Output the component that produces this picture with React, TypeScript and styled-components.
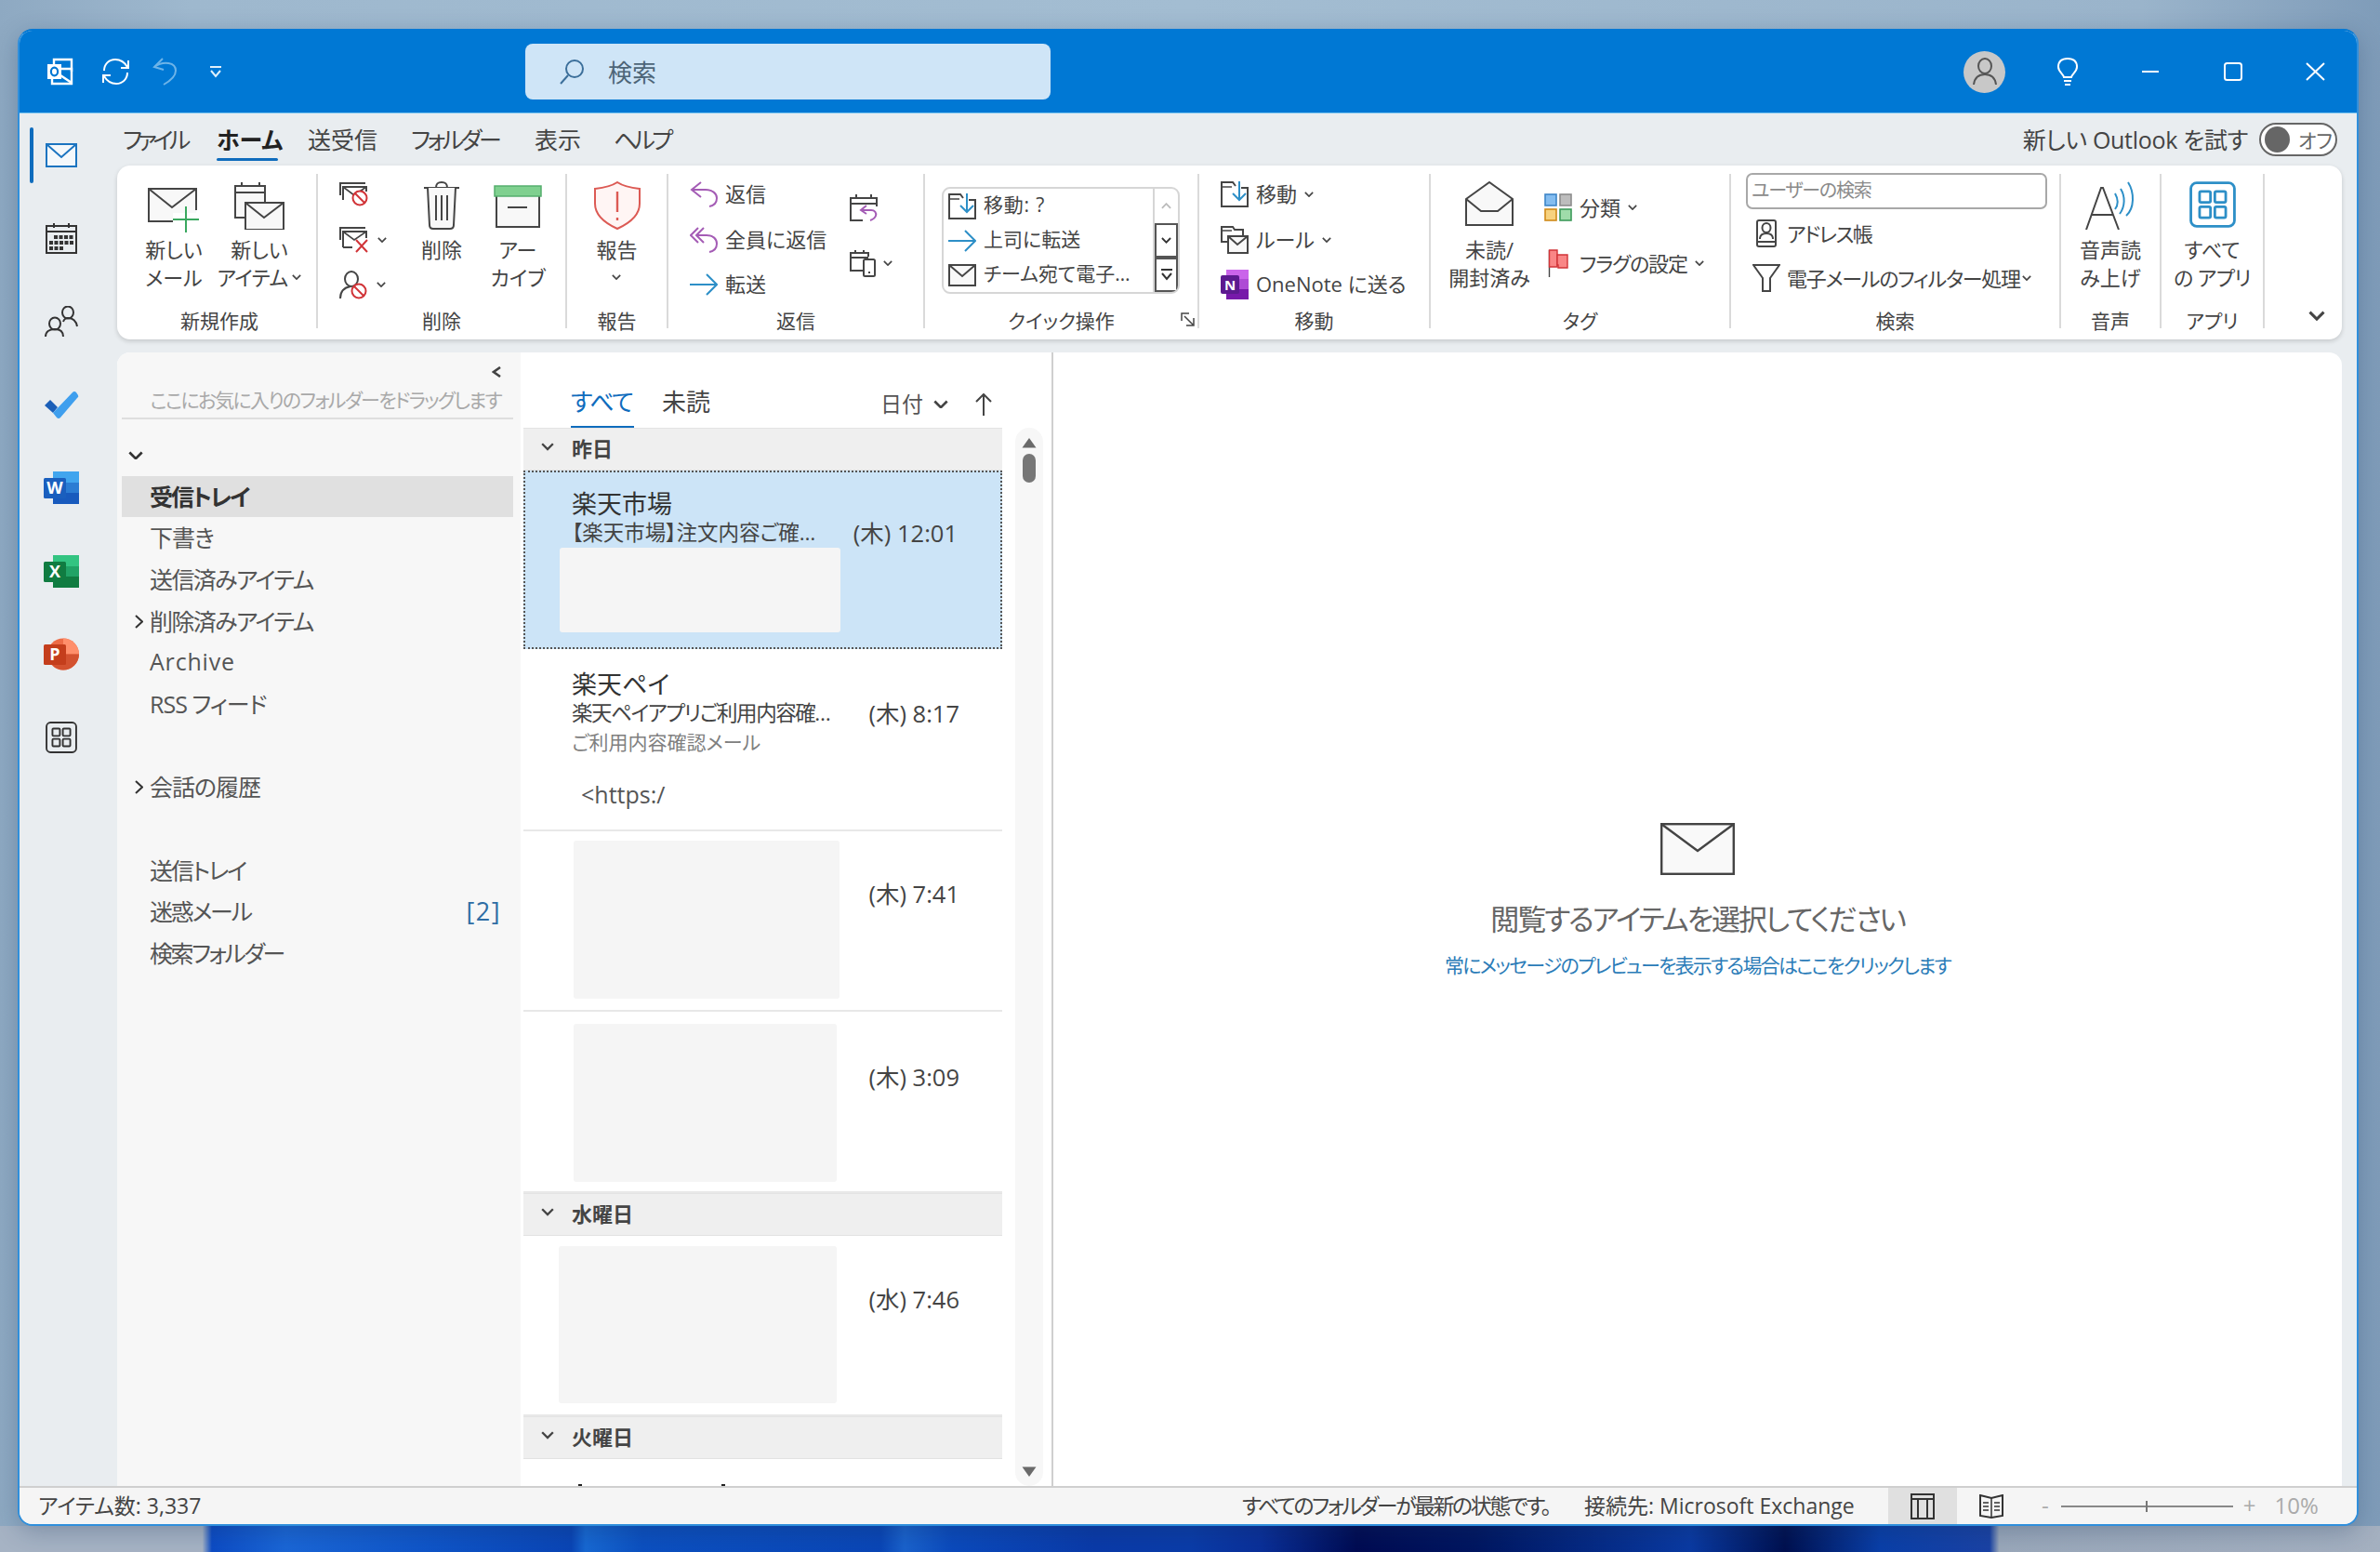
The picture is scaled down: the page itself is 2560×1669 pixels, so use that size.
import React from "react";
import styled, { createGlobalStyle } from "styled-components";

const Global = createGlobalStyle`
  html, body { margin: 0; padding: 0; }
  body {
    width: 2560px; height: 1669px; overflow: hidden;
    font-family: "Open Sans", "Noto Sans CJK JP", sans-serif;
    font-feature-settings: "palt";
    color: #444;
    background:
      linear-gradient(90deg, #a6b3c4 0 8.5%, #0d4cc4 8.9%, #1a66d6 12%, #0f55c8 18%, #0a45b5 24%, #1768d2 24.6%, #0c50c0 27%, #0a46b6 37%, #1a62cc 38%, #0b4abc 40%, #0a3aa8 46%, #0a3ca8 50%, #0a2f98 53%, #000b52 57%, #001660 62%, #0a3aa2 71%, #00104f 75%, #0a3fa8 79%, #1a42a4 83.6%, #9aa8ba 84%, #a4b0c0 100%) left bottom / 100% 28px no-repeat,
      linear-gradient(90deg, #8ea9c2 0, #9eb8ce 8%, #a3bdd2 50%, #9ab4cb 90%, #7f9cb9 100%);
  }
  * { box-sizing: border-box; }
`;

const Page = styled.div`
  width: 2560px; height: 1669px;
  padding: 31px 23px 28px 19px;
`;
const Window = styled.div`
  width: 2518px; height: 1610px;
  display: flex; flex-direction: column;
  border: 2px solid #2f8fdc; border-top-color: #0078d4;
  border-radius: 16px; overflow: hidden;
  box-shadow: 0 6px 26px rgba(20, 50, 90, .28);
  background: #e9edf0;
`;

/* ---------- title bar ---------- */
const TitleBar = styled.header`
  height: 89px; flex: none; background: #0078d4;
  display: flex; align-items: center;
  border-bottom: 1px solid #7cc4f0;
`;
const QuickAccess = styled.div`
  width: 544px; flex: none; display: flex; align-items: center;
  padding-left: 29px; gap: 29px;
`;
const UndoSlot = styled.span`
  display: flex; margin: 0 5px 0 -5px;
`;
const SearchBox = styled.div`
  width: 565px; height: 60px; flex: none;
  background: #cfe5f7; border-radius: 8px;
  display: flex; align-items: center; gap: 26px;
  padding-left: 37px; font-size: 26px; color: #4d6577;
`;
const TitleRight = styled.div`
  margin-left: auto; display: flex; align-items: center;
`;
const TitleSlot = styled.div`
  width: 89px; height: 60px; display: flex; align-items: center; justify-content: center;
`;
const Avatar = styled.div`
  width: 45px; height: 45px; border-radius: 50%; background: #c8c8c8;
  display: flex; align-items: center; justify-content: center;
`;

/* ---------- middle ---------- */
const Middle = styled.div`
  flex: 1; display: flex; min-height: 0;
`;
const Rail = styled.nav`
  width: 105px; flex: none; display: flex; flex-direction: column; align-items: stretch;
`;
const RailItem = styled.div<{ $active?: boolean }>`
  height: 89.5px; flex: none; position: relative;
  display: flex; align-items: center; justify-content: center;
  padding-right: 16px;
  ${p => p.$active ? `
    &::before {
      content: ""; position: absolute; left: 11px; top: 15px; width: 4px; height: 60px;
      border-radius: 2px; background: #0f6cbd;
    }` : ""}
`;
const MainCol = styled.div`
  flex: 1; min-width: 0; display: flex; flex-direction: column; padding-right: 16px;
`;

/* ---------- tabs ---------- */
const TabRow = styled.div`
  height: 56px; flex: none; display: flex; align-items: center; padding: 0 5px 0 6px;
`;
const MenuTab = styled.div<{ $active?: boolean; $w: number; $ls?: number }>`
  width: ${p => p.$w}px; flex: none; height: 40px; line-height: 40px;
  font-size: 25px; white-space: nowrap; position: relative;
  letter-spacing: ${p => p.$ls ?? 0}px;
  font-weight: ${p => (p.$active ? 700 : 400)};
  color: ${p => (p.$active ? "#222" : "#444")};
  ${p => p.$active ? `
    &::after {
      content: ""; position: absolute; left: 0; width: 66px; bottom: -3px; height: 3px;
      border-radius: 2px; background: #0f6cbd;
    }` : ""}
`;
const TryOutlook = styled.div`
  margin-left: auto; display: flex; align-items: center; gap: 12px; font-size: 25px; color: #444;
`;
const TryText = styled.span`
  padding-bottom: 3px; letter-spacing: -.3px;
`;
const Toggle = styled.div`
  width: 84px; height: 36px; border-radius: 18px; border: 2px solid #666;
  display: flex; align-items: center; gap: 9px; padding-left: 4px;
  font-size: 21px; color: #666; background: #fff;
`;
const ToggleKnob = styled.span`
  width: 27px; height: 28px; border-radius: 50%; background: #666; flex: none;
`;

/* ---------- ribbon ---------- */
const Ribbon = styled.div`
  height: 187px; flex: none; background: #fff; border-radius: 14px;
  box-shadow: 0 2px 5px rgba(0, 0, 0, .16);
  display: flex; padding-top: 9px; font-size: 22px; color: #444;
`;
const Group = styled.section<{ $w: number; $last?: boolean }>`
  width: ${p => p.$w}px; flex: none; height: 166px;
  display: flex; flex-direction: column;
  border-right: ${p => (p.$last ? "none" : "2px solid #dadada")};
`;
const GroupBody = styled.div<{ $pl?: number; $gap?: number; $center?: boolean }>`
  flex: 1; min-height: 0; display: flex;
  padding-left: ${p => p.$pl ?? 0}px;
  gap: ${p => p.$gap ?? 0}px;
  justify-content: ${p => (p.$center ? "center" : "flex-start")};
`;
const GroupLabel = styled.div<{ $pl?: number }>`
  height: 22px; line-height: 22px; margin-bottom: -3px; text-align: center;
  padding-left: ${p => p.$pl ?? 0}px;
  font-size: 21px; color: #444; position: relative; flex: none;
`;
const Launcher = styled.span`
  position: absolute; right: 3px; top: 2px; display: flex;
`;
const LargeBtn = styled.div<{ $w: number }>`
  width: ${p => p.$w}px; flex: none; display: flex; flex-direction: column; align-items: center;
  padding-top: 8px;
`;
const IconBox = styled.div`
  height: 52px; flex: none; display: flex; align-items: flex-start; justify-content: center;
`;
const BtnLines = styled.div`
  margin-top: 6px; text-align: center; line-height: 30px; white-space: nowrap;
`;
const BtnLine = styled.div<{ $ls?: number }>`
  display: flex; align-items: center; justify-content: center; gap: 5px; height: 30px;
  letter-spacing: ${p => p.$ls ?? 0}px;
`;
const Stack = styled.div<{ $w?: number; $pl?: number }>`
  ${p => (p.$w ? `width: ${p.$w}px; flex: none;` : "")}
  padding-left: ${p => p.$pl ?? 0}px;
  display: flex; flex-direction: column; gap: 4.5px;
`;
const StackRow = styled.div<{ $gap?: number }>`
  height: 44px; display: flex; align-items: center; gap: ${p => p.$gap ?? 8}px; white-space: nowrap;
`;
const RowText = styled.span<{ $ls?: number; $pb?: number }>`
  padding-bottom: ${p => p.$pb ?? 4}px;
  letter-spacing: ${p => p.$ls ?? 0}px;
`;
const SmallIcon = styled.span`
  width: 30px; flex: none; display: flex; align-items: center; justify-content: center;
`;
const TwinCol = styled.div<{ $ml?: number }>`
  display: flex; flex-direction: column; gap: 30px; padding-top: 21px;
  margin-left: ${p => p.$ml ?? 0}px;
`;
const TwinRow = styled.div`
  height: 30px; display: flex; align-items: center; gap: 8px; white-space: nowrap;
`;
const QuickBox = styled.div`
  width: 256px; height: 115px; margin-top: 14px; flex: none;
  border: 2px solid #d6d6d6; border-radius: 9px; display: flex; overflow: hidden;
`;
const QuickList = styled.div`
  flex: 1; display: flex; flex-direction: column; padding-left: 5px; min-width: 0;
`;
const QuickRow = styled.div`
  height: 37.6px; display: flex; align-items: center; gap: 8px; white-space: nowrap; font-size: 21px;
`;
const QuickScroll = styled.div`
  width: 27px; flex: none; display: flex; flex-direction: column; border-left: 2px solid #d6d6d6;
`;
const QuickBtn = styled.div<{ $dark?: boolean }>`
  flex: 1; display: flex; align-items: center; justify-content: center;
  ${p => (p.$dark ? "box-shadow: inset 0 0 0 2px #555;" : "")}
`;
const SearchInput = styled.div`
  width: 324px; height: 39px; flex: none; margin-top: -1px;
  border: 2px solid #a8a8a8; border-radius: 7px; padding-left: 4px;
  font-size: 20px; line-height: 34px; color: #8a8a8a; letter-spacing: -1.2px;
`;
const SearchCol = styled.div`
  display: flex; flex-direction: column; gap: 4px;
`;
const SearchRow = styled.div`
  height: 44px; display: flex; align-items: center; gap: 2px; padding-left: 2px; white-space: nowrap;
`;
const SearchIcon = styled.span`
  width: 40px; flex: none; display: flex; justify-content: center;
`;
const CollapseCell = styled.div`
  width: 81px; flex: none; display: flex; justify-content: flex-end; align-items: flex-end;
  height: 166px; padding: 0 16px 8px 0;
`;

/* ---------- panes ---------- */
const Panes = styled.div`
  flex: 1; min-height: 0; margin-top: 14px; display: flex; overflow: hidden;
  border-radius: 14px 14px 0 0; background: #fff;
`;
const FolderPane = styled.aside`
  width: 434px; flex: none; background: #f7f7f7; padding: 0 8px 0 5px;
  display: flex; flex-direction: column;
`;
const FavHeader = styled.div`
  height: 72px; flex: none; border-bottom: 2px solid #dedede;
  display: flex; flex-direction: column; align-items: flex-end; padding-right: 13px;
`;
const CollapseArrow = styled.div`
  height: 20px; margin-top: 11px; display: flex; align-items: center;
`;
const FavText = styled.div`
  font-size: 21px; line-height: 28px; margin-top: 6px; color: #a9a9a9; white-space: nowrap;
  letter-spacing: -1.75px;
`;
const FolderList = styled.div`
  margin-top: 16px; display: flex; flex-direction: column;
`;
const FolderRow = styled.div<{ $active?: boolean }>`
  height: 44.7px; flex: none; display: grid; grid-template-columns: 30px 1fr auto; align-items: center;
  padding-right: 13px; font-size: 25px; white-space: nowrap;
  background: ${p => (p.$active ? "#e0e0e0" : "transparent")};
  font-weight: ${p => (p.$active ? 700 : 400)};
  color: ${p => (p.$active ? "#333" : "#555")};
`;
const FolderName = styled.span<{ $ls?: number }>`
  padding-bottom: 3px; letter-spacing: ${p => p.$ls ?? 0}px;
`;
const FolderChevron = styled.span`
  display: flex; justify-content: flex-end; padding-right: 7px;
`;
const FolderCount = styled.span`
  color: #2f6da4; font-size: 27px; letter-spacing: 1.5px; padding-bottom: 3px;
`;

const ListPane = styled.section`
  width: 573px; flex: none; border-right: 2px solid #cfcfcf; display: flex; flex-direction: column; min-height: 0;
`;
const ListTop = styled.div`
  height: 81px; flex: none; display: flex; align-items: flex-end; padding-left: 54px; gap: 30px;
`;
const ListTab = styled.div<{ $active?: boolean; $w: number; $ls?: number }>`
  width: ${p => p.$w}px; height: 50px; line-height: 44px; padding-bottom: 4px; font-size: 26px; white-space: nowrap;
  letter-spacing: ${p => p.$ls ?? 0}px;
  color: ${p => (p.$active ? "#0f6cbd" : "#444")};
  border-bottom: 2px solid ${p => (p.$active ? "#0f6cbd" : "transparent")};
`;
const SortBox = styled.div`
  margin-left: auto; height: 50px; display: flex; align-items: center; padding: 0 64px 4px 0;
  font-size: 23px; color: #555;
`;
const SortChevron = styled.span`
  display: flex; margin: 3px 0 0 11px;
`;
const SortArrow = styled.span`
  display: flex; margin: 3px 0 0 29px;
`;
const ListBody = styled.div`
  flex: 1; min-height: 0; display: flex; padding-left: 3px;
`;
const Items = styled.div`
  width: 515px; flex: none; overflow: hidden; display: flex; flex-direction: column;
`;
const SectionHead = styled.div`
  height: 46px; flex: none; background: #efefef; display: flex; align-items: center;
  border-top: 1px solid #e4e4e4; border-bottom: 1px solid #e2e2e2;
  font-size: 22px; font-weight: 700; color: #444; padding: 0 0 5px 19px; gap: 19px;
`;
const MailRow = styled.div<{ $selected?: boolean; $h: number; $pt: number }>`
  height: ${p => p.$h}px; flex: none; padding-top: ${p => p.$pt}px; padding-right: 46px;
  display: flex; flex-direction: column; overflow: hidden;
  ${p => (p.$selected
    ? "background: #cce4f7; border: 2px dotted #555;"
    : "border-bottom: 2px solid #e8e8e8;")}
`;
const Sender = styled.div<{ $ml: number }>`
  margin-left: ${p => p.$ml}px; font-size: 27px; line-height: 36px; color: #333; white-space: nowrap;
`;
const SubjectLine = styled.div<{ $ml: number }>`
  margin-left: ${p => p.$ml}px; display: flex; justify-content: space-between; align-items: center;
  font-size: 22.5px; line-height: 32px; color: #444; white-space: nowrap; margin-top: -3px;
`;
const SubjectText = styled.span<{ $ls?: number }>`
  letter-spacing: ${p => p.$ls ?? 0}px;
`;
const TimeText = styled.span`
  font-size: 25.5px; color: #444; white-space: nowrap;
`;
const Preview = styled.div`
  margin-left: 52px; font-size: 21px; line-height: 30px; color: #808080; white-space: nowrap;
`;
const UrlText = styled.div`
  margin: 25px 0 0 62px; font-size: 25px; line-height: 32px; color: #555;
`;
const Redacted = styled.div<{ $w: number; $h: number; $ml: number }>`
  width: ${p => p.$w}px; height: ${p => p.$h}px; margin-left: ${p => p.$ml}px; flex: none;
  background: #f5f5f5; border-radius: 3px;
`;
const BlockRow = styled.div`
  display: flex; justify-content: space-between; align-items: flex-start;
`;
const BlockTime = styled(TimeText)`
  margin-top: 41px; line-height: 32px;
`;
const ClippedMarks = styled.div`
  display: flex; gap: 150px; padding: 27px 0 0 59px; flex: none;
`;
const ClippedMark = styled.span`
  width: 4px; height: 4px; background: #222; flex: none;
`;
const ScrollTrack = styled.div`
  width: 30px; flex: none; margin-left: 14px; background: #f7f7f7; border-radius: 15px;
  display: flex; flex-direction: column; align-items: center; padding: 10px 0 9px;
`;
const Thumb = styled.div`
  width: 14px; height: 31px; margin-top: 6px; border-radius: 7px; background: #777;
`;
const ScrollDown = styled.div`
  margin-top: auto; display: flex;
`;
const ReadingPane = styled.main`
  flex: 1; min-width: 0; display: flex; flex-direction: column; align-items: center; padding-top: 506px;
`;
const ReadingTitle = styled.div`
  margin-top: 25px; font-size: 31px; line-height: 44px; color: #666; white-space: nowrap; letter-spacing: -2.1px;
`;
const ReadingLink = styled.div`
  margin-top: 13px; font-size: 21px; line-height: 30px; color: #2b7cb8; white-space: nowrap; letter-spacing: -1.75px;
`;

/* ---------- status ---------- */
const StatusBar = styled.footer`
  height: 41px; flex: none; background: #f5f5f5; border-top: 2px solid #cfcfcf;
  display: flex; align-items: center; font-size: 23px; color: #444; white-space: nowrap;
`;
const StatusCount = styled.div`
  width: 1315px; flex: none; padding: 0 0 3px 20px;
`;
const StatusText = styled.div<{ $w: number; $ls?: number }>`
  width: ${p => p.$w}px; flex: none; padding-bottom: 3px; letter-spacing: ${p => p.$ls ?? 0}px;
`;
const ViewBtn = styled.div<{ $active?: boolean }>`
  width: 74px; height: 100%; flex: none; display: flex; align-items: center; justify-content: center;
  background: ${p => (p.$active ? "#e0e0e0" : "transparent")};
`;
const ZoomGroup = styled.div`
  flex: 1; display: flex; align-items: center; color: #aaa; padding: 0 0 3px 17px; font-size: 24px;
`;
const ZoomTrack = styled.div`
  width: 185px; height: 2px; background: #888; margin: 3px 11px 0 13px; flex: none;
  display: flex; justify-content: center; align-items: center;
`;
const ZoomTick = styled.span`
  width: 2px; height: 12px; background: #777; flex: none;
`;
const ZoomPct = styled.span`
  margin-left: 20px;
`;

/* ---------- icons ---------- */
const DK = "#454545";
const FILL = "#f8f8f8";
const RED = "#d13438";
const BLUE = "#2d8fc7";
const PUR = "#a45cb5";

const Chevron = ({ s = 12, c = "#444", w = 2 }: { s?: number; c?: string; w?: number }) => (
  <svg width={s} height={s * 0.6} viewBox="0 0 12 7" fill="none" stroke={c} strokeWidth={w}>
    <polyline points="1,1 6,6 11,1" />
  </svg>
);
const ChevronRight = () => (
  <svg width="9" height="15" viewBox="0 0 9 15" fill="none" stroke="#333" strokeWidth="2">
    <polyline points="1,1 8,7.5 1,14" />
  </svg>
);
const OutlookLogo = () => (
  <svg width="30" height="30" viewBox="0 0 30 30" fill="none" stroke="#fff" strokeWidth="2.4">
    <path d="M8 7V2H27V15" />
    <path d="M12 12H27V28H6V23" />
    <path d="M12 17L27 27" />
    <rect x="1" y="7" width="15" height="16" fill="#fff" stroke="none" />
    <ellipse cx="8.5" cy="15" rx="3.6" ry="4.4" stroke="#0078d4" strokeWidth="2.2" />
  </svg>
);
const SyncIcon = () => (
  <svg width="31" height="28" viewBox="0 0 31 28" fill="none" stroke="#fff" strokeWidth="2">
    <path d="M3 13C3 6 8 1 15 1C21 1 25 4 28 9" />
    <path d="M28 15C28 22 23 27 16 27C10 27 6 24 3 19" />
    <polyline points="29,2 29,10 21,10" />
    <polyline points="2,26 2,18 10,18" />
  </svg>
);
const UndoIcon = () => (
  <svg width="27" height="30" viewBox="0 0 27 30" fill="none" stroke="#6eb4e8" strokeWidth="2">
    <polyline points="11,1 2,10 12,13" />
    <path d="M2 10C12 3 25 5 25 14C25 20 19 25 12 29" />
  </svg>
);
const DropIcon = ({ c = "#dff0fb" }: { c?: string }) => (
  <svg width="14" height="13" viewBox="0 0 14 13" fill="none" stroke={c} strokeWidth="2">
    <path d="M1 1H13" /><polyline points="2,5 7,11 12,5" />
  </svg>
);
const MagnifierIcon = () => (
  <svg width="26" height="27" viewBox="0 0 26 27" fill="none" stroke="#3c6f9a" strokeWidth="2">
    <circle cx="16" cy="10" r="9" /><path d="M9 17L1 26" />
  </svg>
);
const AvatarIcon = () => (
  <svg width="26" height="30" viewBox="0 0 26 30" fill="none" stroke="#555" strokeWidth="2">
    <ellipse cx="13" cy="9" rx="7" ry="8" /><path d="M1 29C2 21 7 18 13 18C19 18 24 21 25 29" />
  </svg>
);
const BulbIcon = () => (
  <svg width="22" height="31" viewBox="0 0 22 31" fill="none" stroke="#fff" strokeWidth="2">
    <path d="M7 21C6 17 1 15 1 10C1 4 5 1 11 1C17 1 21 4 21 10C21 15 16 17 15 21Z" />
    <path d="M7 25H15M8 29H14" />
  </svg>
);
const MinIcon = () => (
  <svg width="20" height="4" viewBox="0 0 20 4"><path d="M1 2H19" stroke="#fff" strokeWidth="2" /></svg>
);
const MaxIcon = () => (
  <svg width="20" height="20" viewBox="0 0 20 20" fill="none"><rect x="1" y="1" width="18" height="18" rx="2.5" stroke="#fff" strokeWidth="2" /></svg>
);
const CloseIcon = () => (
  <svg width="21" height="20" viewBox="0 0 21 20"><path d="M1 1L20 19M20 1L1 19" stroke="#fff" strokeWidth="2" /></svg>
);
const RailMail = () => (
  <svg width="34" height="26" viewBox="0 0 34 26" fill="#f4f8fb" stroke="#1b74c0" strokeWidth="2">
    <rect x="1" y="1" width="32" height="24" /><polyline points="1,1 17,15 33,1" fill="none" />
  </svg>
);
const RailCalendar = () => (
  <svg width="34" height="34" viewBox="0 0 34 34" fill="none" stroke="#333" strokeWidth="2">
    <rect x="1" y="4" width="32" height="29" />
    <path d="M1 10H33M9 1V6M25 1V6" />
    <g fill="#333" stroke="none">
      {[0, 1, 2, 3].map(i => <rect key={i} x={9 + i * 5.5} y="14" width="4" height="4" />)}
      {[0, 1, 2, 3, 4].map(i => <rect key={i} x={4 + i * 5.5} y="20" width="4" height="4" />)}
      {[0, 1, 2].map(i => <rect key={i} x={4 + i * 5.5} y="26" width="4" height="4" />)}
    </g>
  </svg>
);
const RailPeople = () => (
  <svg width="36" height="34" viewBox="0 0 36 34" fill="none" stroke="#333" strokeWidth="2">
    <ellipse cx="11" cy="19" rx="6" ry="6.5" />
    <path d="M1 33C1 28 5 25 11 25C17 25 20 28 20 33" />
    <ellipse cx="25" cy="7" rx="6" ry="6.5" />
    <path d="M20 17C21 14 23 13 25 13C31 13 34 17 35 22" />
  </svg>
);
const TodoIcon = () => (
  <svg width="38" height="31" viewBox="0 0 38 31">
    <path d="M1 16L7 10L15 18L10 24Z" fill="#1b5fb8" />
    <path d="M10 24L31 2Q33 0 35 2L37 5Q38 7 36 8L18 29Q16 31 14 29Z" fill="#3f9fee" />
  </svg>
);
const OfficeLogo = ({ letter, kind }: { letter: string; kind: "w" | "x" | "p" }) => (
  <svg width="38" height="35" viewBox="0 0 38 35">
    {kind === "w" && (<>
      <rect x="10" y="0" width="28" height="12" fill="#41a5ee" />
      <rect x="10" y="12" width="28" height="11" fill="#2b7cd3" />
      <rect x="10" y="23" width="28" height="12" fill="#185abd" />
    </>)}
    {kind === "x" && (<>
      <rect x="10" y="0" width="28" height="12" fill="#33c481" />
      <rect x="10" y="12" width="28" height="11" fill="#21a366" />
      <rect x="10" y="23" width="28" height="12" fill="#107c41" />
    </>)}
    {kind === "p" && (<>
      <circle cx="21" cy="17.5" r="17" fill="#ed6c47" />
      <path d="M21 .5A17 17 0 0 1 38 17.5H21Z" fill="#ff8f6b" />
      <path d="M21 17.5H38A17 17 0 0 1 21 34.5A17 17 0 0 1 10 30V17.5Z" fill="#d35230" />
    </>)}
    <rect x="0" y="7" width="24" height="22" rx="1.5" fill={kind === "w" ? "#1a5fbe" : kind === "x" ? "#107c41" : "#c43e1c"} />
    <text x="12" y="24" textAnchor="middle" fontFamily="Open Sans, sans-serif" fontWeight="700" fontSize="18" fill="#fff">{letter}</text>
  </svg>
);
const AppsIcon = ({ s = 34, c = "#333" }: { s?: number; c?: string }) => (
  <svg width={s} height={s} viewBox="0 0 32 32" fill="none" stroke={c} strokeWidth="1.8">
    <rect x="1" y="1" width="30" height="30" rx="4" />
    <rect x="7" y="7" width="7.5" height="7.5" rx="1" /><rect x="17.5" y="7" width="7.5" height="7.5" rx="1" />
    <rect x="7" y="17.5" width="7.5" height="7.5" rx="1" /><rect x="17.5" y="17.5" width="7.5" height="7.5" rx="1" />
  </svg>
);
const NewMailIcon = () => (
  <svg width="56" height="52" viewBox="0 0 56 52" fill="none" style={{ overflow: "visible" }}>
    <path d="M1 8H52V34H27V43H1Z" fill={FILL} stroke="none" />
    <path d="M52 31V8H1V43H27" stroke={DK} strokeWidth="2" />
    <polyline points="1,8 26,28 52,8" stroke={DK} strokeWidth="2" />
    <path d="M41 27V55M27 41H55" stroke="#3aa85f" strokeWidth="2" />
  </svg>
);
const NewItemIcon = () => (
  <svg width="54" height="52" viewBox="0 0 54 52" fill="none">
    <path d="M12 39H1V5H33V23" stroke={DK} strokeWidth="2" fill={FILL} />
    <path d="M1 12H33M8 1V6M27 1V6" stroke={DK} strokeWidth="2" />
    <rect x="12" y="23" width="41" height="29" fill={FILL} stroke={DK} strokeWidth="2" />
    <polyline points="12,23 32,39 53,23" stroke={DK} strokeWidth="2" />
  </svg>
);
const Ban = ({ cx, cy, r = 7.5 }: { cx: number; cy: number; r?: number }) => (
  <g>
    <circle cx={cx} cy={cy} r={r} fill="#fff" stroke={RED} strokeWidth="2" />
    <path d={`M${cx - r * 0.7} ${cy - r * 0.7}L${cx + r * 0.7} ${cy + r * 0.7}`} stroke={RED} strokeWidth="2" />
  </g>
);
const IgnoreIcon = () => (
  <svg width="31" height="26" viewBox="0 0 31 26" fill="none">
    <path d="M1 14V1H28M4 19V5H29V10" stroke={DK} strokeWidth="2" />
    <polyline points="4,5 16,14 29,5" stroke={DK} strokeWidth="1.6" />
    <Ban cx={22} cy={17} />
  </svg>
);
const CleanIcon = () => (
  <svg width="31" height="28" viewBox="0 0 31 28" fill="none">
    <path d="M1 14V1H28M4 22V5H29V12M4 22H14" stroke={DK} strokeWidth="2" />
    <polyline points="4,5 16,14 29,5" stroke={DK} strokeWidth="1.6" />
    <path d="M18 14L30 27M30 14L18 27" stroke={RED} strokeWidth="2" />
  </svg>
);
const BlockIcon = () => (
  <svg width="30" height="31" viewBox="0 0 30 31" fill="none">
    <ellipse cx="13" cy="9" rx="7" ry="8" stroke={DK} strokeWidth="2" />
    <path d="M1 30C1 22 6 18 12 17" stroke={DK} strokeWidth="2" />
    <Ban cx={21} cy={22} />
  </svg>
);
const TrashIcon = () => (
  <svg width="40" height="52" viewBox="0 0 40 52" fill="none" stroke={DK} strokeWidth="2">
    <path d="M1 7H39M14 7C14 2 16 1 20 1C24 1 26 2 26 7" />
    <path d="M5 7L7 47Q7 51 11 51H29Q33 51 33 47L35 7" fill={FILL} />
    <path d="M14 15V42M20 15V42M26 15V42" />
  </svg>
);
const ArchiveIcon = () => (
  <svg width="52" height="46" viewBox="0 0 52 46" fill="none" style={{ marginTop: 4 }}>
    <rect x="3" y="11" width="46" height="34" fill={FILL} stroke={DK} strokeWidth="2" />
    <rect x="1" y="1" width="50" height="11" fill="#7fd08f" stroke="#55ae6d" strokeWidth="1.5" />
    <path d="M15 24H36" stroke={DK} strokeWidth="2" />
  </svg>
);
const ShieldIcon = () => (
  <svg width="50" height="52" viewBox="0 0 50 52" fill="#fff5f4" stroke="#dc5a54" strokeWidth="2">
    <path d="M25 1C31 5 40 7 49 8V24C49 38 36 46 25 51C14 46 1 38 1 24V8C10 7 19 5 25 1Z" />
    <path d="M25 11V33M25 39V42" fill="none" strokeWidth="2.4" />
  </svg>
);
const ReplyIcon = () => (
  <svg width="30" height="28" viewBox="0 0 30 28" fill="none" stroke={PUR} strokeWidth="2">
    <polyline points="12,1 2,9 12,17" /><path d="M2 9H17C24 9 29 13 29 18C29 23 26 26 21 27" />
  </svg>
);
const ReplyAllIcon = () => (
  <svg width="30" height="28" viewBox="0 0 30 28" fill="none" stroke={PUR} strokeWidth="2">
    <polyline points="9,1 1,9 9,17" /><polyline points="15,1 7,9 15,17" />
    <path d="M7 9H18C25 9 29 13 29 18C29 23 26 26 21 27" />
  </svg>
);
const ForwardIcon = ({ w = 30 }: { w?: number }) => (
  <svg width={w} height="26" viewBox="0 0 30 26" fill="none" stroke={BLUE} strokeWidth="2">
    <path d="M0 13H28" /><polyline points="18,2 29,13 18,24" />
  </svg>
);
const CalReplyIcon = () => (
  <svg width="30" height="30" viewBox="0 0 30 30" fill="none">
    <path d="M14 29H1V5H29V14" stroke={DK} strokeWidth="2" />
    <path d="M1 11H29M7 1V6M23 1V6" stroke={DK} strokeWidth="2" />
    <polyline points="18,13 12,18 18,22" stroke={PUR} strokeWidth="2" />
    <path d="M12 18H23C27 18 29 21 28 24C27 27 25 28 22 29" stroke={PUR} strokeWidth="2" />
  </svg>
);
const CalDeviceIcon = () => (
  <svg width="28" height="30" viewBox="0 0 28 30" fill="none" stroke={DK} strokeWidth="2">
    <path d="M14 23H1V4H20V8" /><path d="M1 9H20M6 1V5M15 1V5" />
    <rect x="15" y="11" width="12" height="18" rx="1.5" fill="#fff" /><path d="M20 25H22" />
  </svg>
);
const MoveIcon = () => (
  <svg width="30" height="28" viewBox="0 0 30 28" fill="none">
    <path d="M22 7H29V27H1V1H13L16 5" stroke={DK} strokeWidth="2" />
    <path d="M1 6H12" stroke={DK} strokeWidth="1.5" />
    <path d="M20 0V19" stroke={BLUE} strokeWidth="2" /><polyline points="13,13 20,20 27,13" stroke={BLUE} strokeWidth="2" />
  </svg>
);
const EnvIcon = () => (
  <svg width="30" height="24" viewBox="0 0 30 24" fill={FILL} stroke={DK} strokeWidth="2">
    <rect x="1" y="1" width="28" height="22" /><polyline points="1,1 15,13 29,1" fill="none" />
  </svg>
);
const BigEnvIcon = () => (
  <svg width="80" height="56" viewBox="0 0 80 56" fill="#f9f9f9" stroke="#444" strokeWidth="2.4">
    <rect x="1.2" y="1.2" width="77.6" height="53.6" /><polyline points="1.2,1.2 40,30 78.8,1.2" fill="none" />
  </svg>
);
const RuleIcon = () => (
  <svg width="30" height="30" viewBox="0 0 30 30" fill="none" stroke={DK} strokeWidth="2">
    <path d="M8 17H1V1H13L15 4H24V10" /><path d="M1 5H12" strokeWidth="1.5" />
    <rect x="8" y="11" width="21" height="18" fill={FILL} /><polyline points="8,11 18,20 29,11" />
  </svg>
);
const OneNoteLogo = () => (
  <svg width="30" height="32" viewBox="0 0 30 32">
    <rect x="6" y="0" width="24" height="11" fill="#ca64ea" />
    <rect x="6" y="10" width="24" height="11" fill="#ae4bd5" />
    <rect x="6" y="21" width="24" height="11" fill="#7719aa" />
    <rect x="0" y="6" width="20" height="20" rx="2" fill="#5c1a8f" />
    <text x="10" y="22" textAnchor="middle" fontFamily="Open Sans, sans-serif" fontWeight="700" fontSize="15" fill="#fff">N</text>
  </svg>
);
const OpenEnvIcon = () => (
  <svg width="52" height="48" viewBox="0 0 52 48" fill={FILL} stroke={DK} strokeWidth="2">
    <path d="M1 19L26 1L51 19V47H1Z" /><polyline points="1,19 17,32 35,32 51,19" fill="none" />
  </svg>
);
const CategoryIcon = () => (
  <svg width="30" height="30" viewBox="0 0 30 30" strokeWidth="1.6">
    <rect x="1" y="1" width="12" height="12" fill="#84bdf0" stroke="#3d85c8" />
    <rect x="17" y="1" width="12" height="12" fill="#bdbdbd" stroke="#8c8c8c" />
    <rect x="1" y="17" width="12" height="12" fill="#f7d27f" stroke="#d08a1a" />
    <rect x="17" y="17" width="12" height="12" fill="#9fdcaa" stroke="#3d9a5a" />
  </svg>
);
const FlagIcon = () => (
  <svg width="22" height="30" viewBox="0 0 22 30" strokeWidth="1.4">
    <path d="M1.5 1V30" stroke={DK} fill="none" />
    <path d="M1.5 1H10V19H1.5Z" fill="#f98686" stroke="#d13438" />
    <path d="M10 6H21V20H11V17H10Z" fill="#f98686" stroke="#d13438" />
  </svg>
);
const ContactIcon = () => (
  <svg width="22" height="30" viewBox="0 0 22 30" fill="none" stroke={DK} strokeWidth="2">
    <rect x="1" y="1" width="20" height="28" rx="2" />
    <path d="M1 24H21" /><ellipse cx="11" cy="9" rx="4.5" ry="5" />
    <path d="M4 21C4 17 7 15 11 15C15 15 18 17 18 21" />
  </svg>
);
const FilterIcon = () => (
  <svg width="30" height="30" viewBox="0 0 30 30" fill="none" stroke={DK} strokeWidth="2">
    <path d="M1 1H29L19 15V29H11V15Z" />
  </svg>
);
const ReadAloudIcon = () => (
  <svg width="54" height="52" viewBox="0 0 54 52" fill="none">
    <path d="M1 52L17 7L19 7L36 52M7 36H30" stroke={DK} strokeWidth="2" />
    <path d="M32 13C36 20 35 26 32 30" stroke={BLUE} strokeWidth="2" />
    <path d="M38 8C43 16 43 27 37 35" stroke={BLUE} strokeWidth="2" />
    <path d="M46 1C53 12 53 29 44 37" stroke={BLUE} strokeWidth="2" />
  </svg>
);
const LauncherIcon = () => (
  <svg width="15" height="15" viewBox="0 0 15 15" fill="none" stroke="#444" strokeWidth="1.5">
    <path d="M1 9V1H9" /><path d="M4 4L13 13M14 6V14H6" />
  </svg>
);
const UpArrow = () => (
  <svg width="18" height="24" viewBox="0 0 18 24" fill="none" stroke="#444" strokeWidth="2">
    <path d="M9 1V24" /><polyline points="1,9 9,1 17,9" />
  </svg>
);
const Tri = ({ up }: { up?: boolean }) => (
  <svg width="16" height="12" viewBox="0 0 16 12" fill="#6a6a6a">
    <path d={up ? "M8 1L15.5 11.5H.5Z" : "M8 11L15.5 .5H.5Z"} />
  </svg>
);
const CollapseLeft = () => (
  <svg width="10" height="12" viewBox="0 0 10 12" fill="none" stroke="#444" strokeWidth="2.6">
    <polyline points="9,1 2,6 9,11" />
  </svg>
);
const ColumnsIcon = () => (
  <svg width="26" height="28" viewBox="0 0 26 28" fill="none" stroke="#333" strokeWidth="2">
    <rect x="1" y="1" width="24" height="26" /><path d="M1 6H25M8 6V27M18 6V27" />
  </svg>
);
const BookIcon = () => (
  <svg width="26" height="26" viewBox="0 0 26 26" fill="none" stroke="#333" strokeWidth="2">
    <path d="M1 1L13 4L25 1V23L13 25L1 23Z" /><path d="M13 4V25M4 9H10M4 13H10M4 17H10M16 9H22M16 13H22M16 17H22" strokeWidth="1.5" />
  </svg>
);

export default function App() {
  return (
    <Page>
      <Global />
      <Window>
        <TitleBar>
          <QuickAccess>
            <OutlookLogo />
            <SyncIcon />
            <UndoSlot><UndoIcon /></UndoSlot>
            <DropIcon />
          </QuickAccess>
          <SearchBox>
            <MagnifierIcon />
            <span>検索</span>
          </SearchBox>
          <TitleRight>
            <TitleSlot><Avatar><AvatarIcon /></Avatar></TitleSlot>
            <TitleSlot><BulbIcon /></TitleSlot>
            <TitleSlot><MinIcon /></TitleSlot>
            <TitleSlot><MaxIcon /></TitleSlot>
            <TitleSlot><CloseIcon /></TitleSlot>
          </TitleRight>
        </TitleBar>

        <Middle>
          <Rail>
            <RailItem $active><RailMail /></RailItem>
            <RailItem><RailCalendar /></RailItem>
            <RailItem><RailPeople /></RailItem>
            <RailItem><TodoIcon /></RailItem>
            <RailItem><OfficeLogo letter="W" kind="w" /></RailItem>
            <RailItem><OfficeLogo letter="X" kind="x" /></RailItem>
            <RailItem><OfficeLogo letter="P" kind="p" /></RailItem>
            <RailItem><AppsIcon /></RailItem>
          </Rail>

          <MainCol>
            <TabRow>
              <MenuTab $w={101} $ls={-4.4}>ファイル</MenuTab>
              <MenuTab $w={98} $active>ホーム</MenuTab>
              <MenuTab $w={111}>送受信</MenuTab>
              <MenuTab $w={133} $ls={-3.4}>フォルダー</MenuTab>
              <MenuTab $w={85}>表示</MenuTab>
              <MenuTab $w={79} $ls={-3.8}>ヘルプ</MenuTab>
              <TryOutlook>
                <TryText>新しい Outlook を試す</TryText>
                <Toggle><ToggleKnob /><span>オフ</span></Toggle>
              </TryOutlook>
            </TabRow>

            <Ribbon>
              <Group $w={216}>
                <GroupBody $pl={21} $gap={7}>
                  <LargeBtn $w={80}>
                    <IconBox><NewMailIcon /></IconBox>
                    <BtnLines><BtnLine>新しい</BtnLine><BtnLine>メール</BtnLine></BtnLines>
                  </LargeBtn>
                  <LargeBtn $w={90}>
                    <IconBox><NewItemIcon /></IconBox>
                    <BtnLines><BtnLine>新しい</BtnLine><BtnLine $ls={-.6}>アイテム<Chevron s={10} /></BtnLine></BtnLines>
                  </LargeBtn>
                </GroupBody>
                <GroupLabel $pl={6}>新規作成</GroupLabel>
              </Group>

              <Group $w={268}>
                <GroupBody $pl={18} $gap={8}>
                  <Stack $w={70} $pl={5}>
                    <StackRow $gap={8}><IgnoreIcon /></StackRow>
                    <StackRow $gap={10}><CleanIcon /><Chevron s={10} /></StackRow>
                    <StackRow $gap={10}><BlockIcon /><Chevron s={10} /></StackRow>
                  </Stack>
                  <LargeBtn $w={74}>
                    <IconBox><TrashIcon /></IconBox>
                    <BtnLines><BtnLine>削除</BtnLine></BtnLines>
                  </LargeBtn>
                  <LargeBtn $w={74}>
                    <IconBox><ArchiveIcon /></IconBox>
                    <BtnLines><BtnLine>アー</BtnLine><BtnLine>カイブ</BtnLine></BtnLines>
                  </LargeBtn>
                </GroupBody>
                <GroupLabel>削除</GroupLabel>
              </Group>

              <Group $w={109}>
                <GroupBody $center>
                  <LargeBtn $w={90}>
                    <IconBox><ShieldIcon /></IconBox>
                    <BtnLines><BtnLine>報告</BtnLine><BtnLine><Chevron s={10} /></BtnLine></BtnLines>
                  </LargeBtn>
                </GroupBody>
                <GroupLabel>報告</GroupLabel>
              </Group>

              <Group $w={276}>
                <GroupBody $pl={23}>
                  <Stack $w={172}>
                    <StackRow><SmallIcon><ReplyIcon /></SmallIcon><RowText>返信</RowText></StackRow>
                    <StackRow><SmallIcon><ReplyAllIcon /></SmallIcon><RowText>全員に返信</RowText></StackRow>
                    <StackRow><SmallIcon><ForwardIcon /></SmallIcon><RowText>転送</RowText></StackRow>
                  </Stack>
                  <TwinCol>
                    <TwinRow><CalReplyIcon /></TwinRow>
                    <TwinRow><CalDeviceIcon /><Chevron s={10} /></TwinRow>
                  </TwinCol>
                </GroupBody>
                <GroupLabel>返信</GroupLabel>
              </Group>

              <Group $w={295}>
                <GroupBody $pl={18}>
                  <QuickBox>
                    <QuickList>
                      <QuickRow><SmallIcon><MoveIcon /></SmallIcon><RowText $pb={6} $ls={.8}>移動: ?</RowText></QuickRow>
                      <QuickRow><SmallIcon><ForwardIcon /></SmallIcon><RowText $pb={6}>上司に転送</RowText></QuickRow>
                      <QuickRow><SmallIcon><EnvIcon /></SmallIcon><RowText $pb={6}>チーム宛て電子…</RowText></QuickRow>
                    </QuickList>
                    <QuickScroll>
                      <QuickBtn><svg width="11" height="7" viewBox="0 0 12 7" fill="none" stroke="#bbb" strokeWidth="2"><polyline points="1,6 6,1 11,6" /></svg></QuickBtn>
                      <QuickBtn $dark><Chevron s={11} c="#333" /></QuickBtn>
                      <QuickBtn $dark><DropIcon c="#333" /></QuickBtn>
                    </QuickScroll>
                  </QuickBox>
                </GroupBody>
                <GroupLabel>クイック操作<Launcher><LauncherIcon /></Launcher></GroupLabel>
              </Group>

              <Group $w={249}>
                <GroupBody $pl={23}>
                  <Stack>
                    <StackRow><SmallIcon><MoveIcon /></SmallIcon><RowText>移動</RowText><Chevron s={10} /></StackRow>
                    <StackRow><SmallIcon><RuleIcon /></SmallIcon><RowText>ルール</RowText><Chevron s={10} /></StackRow>
                    <StackRow><SmallIcon><OneNoteLogo /></SmallIcon><RowText>OneNote に送る</RowText></StackRow>
                  </Stack>
                </GroupBody>
                <GroupLabel>移動</GroupLabel>
              </Group>

              <Group $w={323}>
                <GroupBody $pl={8}>
                  <LargeBtn $w={110}>
                    <IconBox><OpenEnvIcon /></IconBox>
                    <BtnLines><BtnLine>未読/</BtnLine><BtnLine>開封済み</BtnLine></BtnLines>
                  </LargeBtn>
                  <TwinCol $ml={4}>
                    <TwinRow><CategoryIcon /><RowText $pb={3}>分類</RowText><Chevron s={10} /></TwinRow>
                    <TwinRow><SmallIcon><FlagIcon /></SmallIcon><RowText $pb={3} $ls={-1.1}>フラグの設定</RowText><Chevron s={10} /></TwinRow>
                  </TwinCol>
                </GroupBody>
                <GroupLabel>タグ</GroupLabel>
              </Group>

              <Group $w={355}>
                <GroupBody $pl={16}>
                  <SearchCol>
                    <SearchInput>ユーザーの検索</SearchInput>
                    <SearchRow><SearchIcon><ContactIcon /></SearchIcon><RowText $pb={3} $ls={-1.6}>アドレス帳</RowText></SearchRow>
                    <SearchRow><SearchIcon><FilterIcon /></SearchIcon><RowText $pb={3} $ls={-1.25}>電子メールのフィルター処理</RowText><Chevron s={10} /></SearchRow>
                  </SearchCol>
                </GroupBody>
                <GroupLabel>検索</GroupLabel>
              </Group>

              <Group $w={108}>
                <GroupBody $center>
                  <LargeBtn $w={100}>
                    <IconBox><ReadAloudIcon /></IconBox>
                    <BtnLines><BtnLine>音声読</BtnLine><BtnLine>み上げ</BtnLine></BtnLines>
                  </LargeBtn>
                </GroupBody>
                <GroupLabel>音声</GroupLabel>
              </Group>

              <Group $w={111}>
                <GroupBody $center>
                  <LargeBtn $w={100}>
                    <IconBox><AppsIcon s={50} c="#2d8fc7" /></IconBox>
                    <BtnLines><BtnLine>すべて</BtnLine><BtnLine $ls={-.6}>の アプリ</BtnLine></BtnLines>
                  </LargeBtn>
                </GroupBody>
                <GroupLabel>アプリ</GroupLabel>
              </Group>

              <CollapseCell><Chevron s={18} c="#444" /></CollapseCell>
            </Ribbon>

            <Panes>
              <FolderPane>
                <FavHeader>
                  <CollapseArrow><CollapseLeft /></CollapseArrow>
                  <FavText>ここにお気に入りのフォルダーをドラッグします</FavText>
                </FavHeader>
                <FolderList>
                  <FolderRow><FolderChevron><Chevron s={16} c="#333" /></FolderChevron></FolderRow>
                  <FolderRow $active><span /><FolderName $ls={-2}>受信トレイ</FolderName></FolderRow>
                  <FolderRow><span /><FolderName $ls={-1}>下書き</FolderName></FolderRow>
                  <FolderRow><span /><FolderName $ls={-1.6}>送信済みアイテム</FolderName></FolderRow>
                  <FolderRow><FolderChevron><ChevronRight /></FolderChevron><FolderName $ls={-1.6}>削除済みアイテム</FolderName></FolderRow>
                  <FolderRow><span /><FolderName $ls={.8}>Archive</FolderName></FolderRow>
                  <FolderRow><span /><FolderName $ls={-1}>RSS フィード</FolderName></FolderRow>
                  <FolderRow />
                  <FolderRow><FolderChevron><ChevronRight /></FolderChevron><FolderName $ls={-1}>会話の履歴</FolderName></FolderRow>
                  <FolderRow />
                  <FolderRow><span /><FolderName $ls={-2}>送信トレイ</FolderName></FolderRow>
                  <FolderRow><span /><FolderName $ls={-2.2}>迷惑メール</FolderName><FolderCount>[2]</FolderCount></FolderRow>
                  <FolderRow><span /><FolderName $ls={-2.5}>検索フォルダー</FolderName></FolderRow>
                </FolderList>
              </FolderPane>

              <ListPane>
                <ListTop>
                  <ListTab $w={68} $active $ls={-1.6}>すべて</ListTab>
                  <ListTab $w={56}>未読</ListTab>
                  <SortBox>
                    日付
                    <SortChevron><Chevron s={16} c="#444" /></SortChevron>
                    <SortArrow><UpArrow /></SortArrow>
                  </SortBox>
                </ListTop>
                <ListBody>
                  <Items>
                    <SectionHead><Chevron s={14} c="#444" />昨日</SectionHead>
                    <MailRow $selected $h={192} $pt={16}>
                      <Sender $ml={50}>楽天市場</Sender>
                      <SubjectLine $ml={50}><SubjectText>【楽天市場】注文内容ご確…</SubjectText><TimeText>(木) 12:01</TimeText></SubjectLine>
                      <Redacted $w={302} $h={91} $ml={37} />
                    </MailRow>
                    <MailRow $h={196} $pt={20}>
                      <Sender $ml={52}>楽天ペイ</Sender>
                      <SubjectLine $ml={52}><SubjectText $ls={-1.45}>楽天ペイアプリご利用内容確…</SubjectText><TimeText>(木) 8:17</TimeText></SubjectLine>
                      <Preview>ご利用内容確認メール</Preview>
                      <UrlText>&lt;https:/</UrlText>
                    </MailRow>
                    <MailRow $h={194} $pt={10}>
                      <BlockRow><Redacted $w={286} $h={170} $ml={54} /><BlockTime>(木) 7:41</BlockTime></BlockRow>
                    </MailRow>
                    <MailRow $h={195} $pt={13}>
                      <BlockRow><Redacted $w={283} $h={170} $ml={54} /><BlockTime>(木) 3:09</BlockTime></BlockRow>
                    </MailRow>
                    <SectionHead><Chevron s={14} c="#444" />水曜日</SectionHead>
                    <MailRow $h={194} $pt={11}>
                      <BlockRow><Redacted $w={299} $h={169} $ml={38} /><BlockTime>(水) 7:46</BlockTime></BlockRow>
                    </MailRow>
                    <SectionHead><Chevron s={14} c="#444" />火曜日</SectionHead>
                    <ClippedMarks><ClippedMark /><ClippedMark /></ClippedMarks>
                  </Items>
                  <ScrollTrack>
                    <Tri up />
                    <Thumb />
                    <ScrollDown><Tri /></ScrollDown>
                  </ScrollTrack>
                </ListBody>
              </ListPane>

              <ReadingPane>
                <BigEnvIcon />
                <ReadingTitle>閲覧するアイテムを選択してください</ReadingTitle>
                <ReadingLink>常にメッセージのプレビューを表示する場合はここをクリックします</ReadingLink>
              </ReadingPane>
            </Panes>
          </MainCol>
        </Middle>

        <StatusBar>
          <StatusCount>アイテム数: 3,337</StatusCount>
          <StatusText $w={368} $ls={-2.5}>すべてのフォルダーが最新の状態です。</StatusText>
          <StatusText $w={327}>接続先: Microsoft Exchange</StatusText>
          <ViewBtn $active><ColumnsIcon /></ViewBtn>
          <ViewBtn><BookIcon /></ViewBtn>
          <ZoomGroup>
            <span>-</span>
            <ZoomTrack><ZoomTick /></ZoomTrack>
            <span>+</span>
            <ZoomPct>10%</ZoomPct>
          </ZoomGroup>
        </StatusBar>
      </Window>
    </Page>
  );
}
